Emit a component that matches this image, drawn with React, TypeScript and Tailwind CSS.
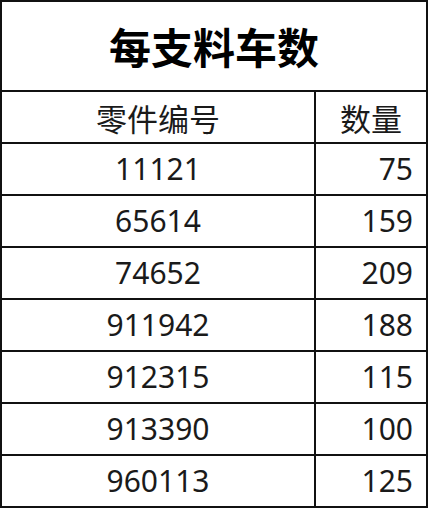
import React from "react";

const rows: [string, string][] = [
  ["11121", "75"],
  ["65614", "159"],
  ["74652", "209"],
  ["911942", "188"],
  ["912315", "115"],
  ["913390", "100"],
  ["960113", "125"],
];

const font = { fontFamily: '"Noto Sans", "Noto Sans CJK SC", sans-serif' };

export default function App() {
  return (
    <div
      className="w-[428px] h-[508px] bg-white border-2 border-[#111] flex flex-col text-[#1a1a1a]"
      style={font}
    >
      <div className="h-[90px] shrink-0 border-b-2 border-[#111] flex items-center justify-center">
        <span className="text-[42px] font-bold leading-none text-black" style={{ fontFamily: '"Noto Sans CJK SC", sans-serif' }}>
          每支料车数
        </span>
      </div>
      <div className="h-[52px] shrink-0 border-b-2 border-[#111] flex">
        <div className="w-[314px] shrink-0 border-r-2 border-[#111] flex items-center justify-center">
          <span className="text-[31px] leading-none" style={{ fontFamily: '"Noto Sans CJK SC", sans-serif' }}>零件编号</span>
        </div>
        <div className="flex-1 flex items-center justify-center">
          <span className="text-[31px] leading-none" style={{ fontFamily: '"Noto Sans CJK SC", sans-serif' }}>数量</span>
        </div>
      </div>
      {rows.map(([id, n], i) => (
        <div
          key={id}
          className={
            i < rows.length - 1
              ? "h-[52px] shrink-0 border-b-2 border-[#111] flex"
              : "flex-1 flex"
          }
        >
          <div className="w-[314px] shrink-0 border-r-2 border-[#111] flex items-center justify-center">
            <span className="text-[30px] leading-none">{id}</span>
          </div>
          <div className="flex-1 flex items-center justify-end pr-[13px]">
            <span className="text-[30px] leading-none">{n}</span>
          </div>
        </div>
      ))}
    </div>
  );
}
